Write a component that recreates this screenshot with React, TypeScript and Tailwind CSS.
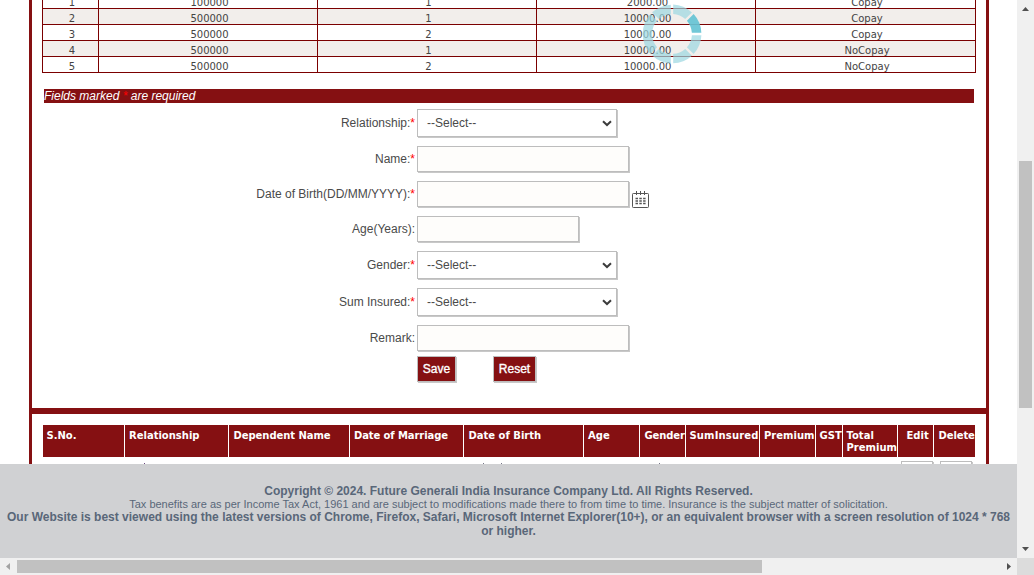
import React from "react";

const planRows = [
  ["1", "100000", "1", "2000.00", "Copay"],
  ["2", "500000", "1", "10000.00", "Copay"],
  ["3", "500000", "2", "10000.00", "Copay"],
  ["4", "500000", "1", "10000.00", "NoCopay"],
  ["5", "500000", "2", "10000.00", "NoCopay"],
];

function PlanTable() {
  return (
    <div className="-mt-[7px] ml-[10px] w-[934px] shrink-0 border-r border-[#7b0000] font-['Verdana','DejaVu_Sans',sans-serif] text-[10px] text-[#444444]">
      {planRows.map((row, i) => (
        <div
          key={row[0]}
          className={`grid h-4 grid-cols-[56px_219px_219px_219px_220px] border-b border-[#7b0000] ${i % 2 ? "bg-[#f2eeeb]" : "bg-white"}`}
        >
          {row.map((cell, j) => (
            <div key={j} className="h-[15px] border-l border-[#7b0000] pl-[3px] text-center leading-[19px]">
              {cell}
            </div>
          ))}
        </div>
      ))}
    </div>
  );
}

function Spinner() {
  const segment = "M1.2 -29.4 A29.4 29.4 0 0 1 19.9 -21.6 L13.2 -14.9 A20 20 0 0 0 1.2 -19.9 Z";
  return (
    <svg className="absolute left-[641px] top-[3px]" width="62" height="62" viewBox="-31 -31 62 62">
      {[0, 1, 2, 3, 4, 7].map((i) => (
        <path
          key={i}
          d={segment}
          transform={`rotate(${i * 45})`}
          fill={i === 1 ? "#66c3d4" : "#9bd7e1"}
          fillOpacity={i === 1 ? 0.92 : 0.7}
        />
      ))}
      <path d="M-21.6 19.9 A29.4 29.4 0 0 1 -21.6 -19.9 L-14.9 -13.2 A20 20 0 0 0 -14.9 13.2 Z" fill="#9bd7e1" fillOpacity="0.7" />
    </svg>
  );
}

function Field({ label, required, row, children }: { label: string; required?: boolean; row: string; children: React.ReactNode }) {
  return (
    <div className={`flex items-start ${row}`}>
      <div className="flex items-center">
        <label className="w-[383px] whitespace-nowrap text-right">
          {label}
          {required && <span className="text-[#ff0000]">*</span>}
        </label>
        <div className="ml-[2px] flex">{children}</div>
      </div>
    </div>
  );
}

function SelectBox() {
  return (
    <div className="flex h-7 w-[200px] items-center justify-between border border-[#bdbdbd] bg-white pl-[9px] pr-1 shadow-[1px_1px_0_#c8c8c8]">
      <span>--Select--</span>
      <svg width="10" height="7" viewBox="0 0 10 7" fill="none" stroke="#3c3c3c" strokeWidth="2">
        <path d="M1 1.2 L5 5 L9 1.2" />
      </svg>
    </div>
  );
}

function TextBox({ width = "w-[212px]" }: { width?: string }) {
  return <div className={`h-[26px] border border-[#bdbdbd] bg-[#fefdfb] shadow-[1px_1px_0_#c8c8c8] ${width}`} />;
}

function CalendarIcon() {
  return (
    <svg className="ml-[3px] mt-[10px] -mb-[10px]" width="17" height="17" viewBox="0 0 17 17" fill="none" stroke="#555">
      <rect x="0.5" y="2.5" width="16" height="14" rx="0.8" />
      <path d="M4.5 0v4M8.5 0v4M12.5 0v4" />
      <path d="M3.5 7.5h10.5M3.5 10h10.5M3.5 12.5h10.5" strokeWidth="1.3" strokeDasharray="2.5 1.3" />
    </svg>
  );
}

const buttonStyle =
  "h-[26px] border border-[#bdbdbd] bg-[#851012] shadow-[1px_1px_0_#c8c8c8] [-webkit-text-stroke:0.35px_white]";

function EntryForm() {
  return (
    <div className="mt-[6px] h-[299px] shrink-0 text-[12px] text-[#4a4a4a]">
      <Field label="Relationship:" required row="h-[37px]"><SelectBox /></Field>
      <Field label="Name:" required row="h-[35px]"><TextBox /></Field>
      <Field label="Date of Birth(DD/MM/YYYY):" required row="h-[35px]"><TextBox /><CalendarIcon /></Field>
      <Field label="Age(Years):" row="h-[35px]"><TextBox width="w-[162px]" /></Field>
      <Field label="Gender:" required row="h-[37px]"><SelectBox /></Field>
      <Field label="Sum Insured:" required row="h-[37px]"><SelectBox /></Field>
      <Field label="Remark:" row="h-[31px]"><TextBox /></Field>
      <div className="ml-[385px] flex gap-[37px] text-white">
        <button className={`w-[39px] ${buttonStyle}`}>Save</button>
        <button className={`w-[43px] ${buttonStyle}`}>Reset</button>
      </div>
    </div>
  );
}

const columns = [
  { name: "S.No.", pad: "pl-[3.5px]" },
  { name: "Relationship", pad: "pl-1" },
  { name: "Dependent Name", pad: "pl-[4.5px] tracking-[-0.05px]" },
  { name: "Date of Marriage", pad: "pl-1 tracking-[-0.1px]" },
  { name: "Date of Birth", pad: "pl-[4.5px]" },
  { name: "Age", pad: "pl-1" },
  { name: "Gender", pad: "pl-[4.5px] tracking-[-0.1px]" },
  { name: "SumInsured", pad: "pl-[3.5px] tracking-[0.15px]" },
  { name: "Premium", pad: "pl-1" },
  { name: "GST", pad: "pl-[3.5px]" },
  { name: "Total Premium", pad: "pl-[3.5px]" },
  { name: "Edit", pad: "pl-[8.5px]" },
  { name: "Delete", pad: "pl-[4.5px] tracking-[-0.1px]" },
];

function DependentsTable() {
  return (
    <div className="ml-[11px] mt-[11px] w-[932px] shrink-0">
      <div className="grid h-8 grid-cols-[81px_103px_120px_113px_119px_55px_45px_73px_55px_26px_54px_35px_41px] gap-px font-['Verdana','DejaVu_Sans',sans-serif] text-[10px] font-bold leading-3 text-white">
        {columns.map((c) => (
          <div key={c.name} className={`bg-[#851012] pt-[5px] ${c.pad}`}>{c.name}</div>
        ))}
      </div>
      <div className="flex h-[30px] pt-1">
        <i className="ml-[101px] mt-[2px] h-px w-px bg-[#6b4a80]" />
        <i className="ml-[338px] mt-[2px] h-px w-px bg-[#777788]" />
        <i className="ml-[17px] mt-[2px] h-px w-px bg-[#777788]" />
        <i className="ml-[157px] mt-[2px] h-px w-px bg-[#777788]" />
        <div className="ml-[241px] h-5 w-8 border border-[#bdbdbd] shadow-[1px_1px_0_#c8c8c8]" />
        <div className="ml-[7px] h-5 w-8 border border-[#bdbdbd] shadow-[1px_1px_0_#c8c8c8]" />
      </div>
    </div>
  );
}

function Footer() {
  return (
    <footer className="h-[94px] shrink-0 bg-[#d0d1d3] pt-5 text-center text-[12px] font-bold leading-[14px] text-[#596779]">
      <p>Copyright © 2024. Future Generali India Insurance Company Ltd. All Rights Reserved.</p>
      <p className="text-[11px] font-normal leading-3">Tax benefits are as per Income Tax Act, 1961 and are subject to modifications made there to from time to time. Insurance is the subject matter of solicitation.</p>
      <p className="whitespace-nowrap">Our Website is best viewed using the latest versions of Chrome, Firefox, Safari, Microsoft Internet Explorer(10+), or an equivalent browser with a screen resolution of 1024 * 768<br />or higher.</p>
    </footer>
  );
}

function Arrow({ direction, color = "#505050" }: { direction: "up" | "down" | "left" | "right"; color?: string }) {
  const shapes = { up: "M5 11l3.5-4 3.5 4z", down: "M5 6l3.5 4 3.5-4z", left: "M10 5l-4 3.5 4 3.5z", right: "M7 5l4 3.5-4 3.5z" };
  return <svg className="shrink-0" width="17" height="17" viewBox="0 0 17 17"><path d={shapes[direction]} fill={color} /></svg>;
}

export default function App() {
  return (
    <div className="flex h-[575px] w-[1034px] flex-col overflow-hidden bg-white font-['Liberation_Sans',Arial,sans-serif]">
      <div className="flex h-[558px]">
        <div className="relative flex w-[1017px] flex-col">
          <main className="ml-[29px] flex h-[464px] w-[960px] shrink-0 flex-col overflow-hidden border-x-[3px] border-[#851012]">
            <PlanTable />
            <div className="ml-3 mt-4 h-[14px] w-[930px] shrink-0 bg-[#851012] text-[12px] italic leading-[14px] text-white">
              Fields marked <span className="text-[#ff0000]">*</span> are required
            </div>
            <EntryForm />
            <div className="h-[6px] shrink-0 bg-[#851012]" />
            <DependentsTable />
          </main>
          <Footer />
          <Spinner />
        </div>
        <div className="flex w-[17px] flex-col justify-between bg-[#f0f0f0]">
          <Arrow direction="up" />
          <div className="mx-auto mb-[133px] mt-auto h-[247px] w-[13px] shrink-0 bg-[#c1c1c1]" />
          <Arrow direction="down" />
        </div>
      </div>
      <div className="flex h-[17px] items-center bg-[#f0f0f0]">
        <Arrow direction="left" color="#a3a3a3" />
        <div className="h-[13px] w-[745px] bg-[#c1c1c1]" />
        <div className="ml-auto flex"><Arrow direction="right" /></div>
        <div className="h-[17px] w-[17px] bg-[#dcdcdc]" />
      </div>
    </div>
  );
}
